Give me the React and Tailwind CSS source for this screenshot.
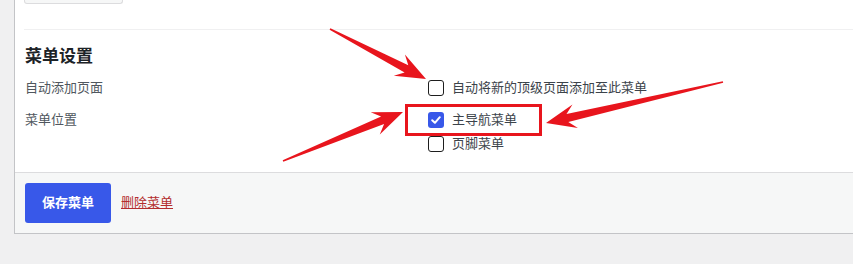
import React from 'react';

const FONT = { fontFamily: '"Liberation Sans", "Noto Sans CJK SC", sans-serif' };

// arrows are drawn as one polygon: thin tail, shaft widening, swept-back head
const arrowPoints = (x1, y1, x2, y2) => {
  const dx = x2 - x1;
  const dy = y2 - y1;
  const len = Math.hypot(dx, dy);
  const ux = dx / len;
  const uy = dy / len;
  const nx = -uy;
  const ny = ux;
  const headLen = 30;
  const headW = 12;
  const neckW = 4;
  const tailW = 0.8;
  const at = (d, w) => [x1 + ux * d + nx * w, y1 + uy * d + ny * w];
  const pts = [
    at(0, tailW),
    at(len - headLen + 8, neckW),
    at(len - headLen, headW),
    [x2, y2],
    at(len - headLen, -headW),
    at(len - headLen + 8, -neckW),
    at(0, -tailW),
  ];
  return pts.map((p) => p.map((v) => v.toFixed(1)).join(',')).join(' ');
};

const arrows = [
  [330, 29, 426, 79],
  [283, 161, 403, 112],
  [723, 82, 546, 123],
];

const Checkbox = ({ checked }) => (
  <span
    className={
      checked
        ? 'w-4 h-4 rounded-[3px] bg-[#3858e9] flex items-center justify-center shrink-0'
        : 'w-4 h-4 rounded-[3px] border border-[#1e1e1e] bg-white shrink-0'
    }
  >
    {checked && (
      <svg width="12" height="12" viewBox="0 0 12 12">
        <path d="M2.2 6.2 L4.9 8.8 L9.8 3.2" fill="none" stroke="white" strokeWidth="2" strokeLinecap="round" strokeLinejoin="round" />
      </svg>
    )}
  </span>
);

const Option = ({ checked, label }) => (
  <label className="h-6 flex items-center gap-2 text-[13px] text-[#3c434a]">
    <Checkbox checked={checked} />
    <span>{label}</span>
  </label>
);

export default function App() {
  return (
    <div className="relative w-[853px] h-[264px] bg-[#f0f0f1] pl-[14px] overflow-hidden" style={FONT}>
      <div className="w-[860px] bg-white border-l border-b border-[#c3c4c7]">
        <div className="px-[9px]">
          <div className="w-[99px] h-[4px] border-x border-b border-[#dcdcde] rounded-b-[3px] bg-[#f6f7f7]" />
          <div className="mt-[25px] border-t border-[#f0f0f1]" />
          <h3 className="mt-[15px] h-6 leading-6 pl-px text-[17px] font-semibold text-[#1d2327]">菜单设置</h3>
          <div className="mt-[7px] grid grid-cols-[403px_1fr] pl-px">
            <div className="h-6 leading-6 text-[13px] text-[#50575e]">自动添加页面</div>
            <div>
              <Option label="自动将新的顶级页面添加至此菜单" />
            </div>
          </div>
          <div className="mt-2 mb-4 grid grid-cols-[403px_1fr] pl-px">
            <div className="h-6 leading-6 text-[13px] text-[#50575e]">菜单位置</div>
            <div className="flex flex-col">
              <Option checked label="主导航菜单" />
              <Option label="页脚菜单" />
            </div>
          </div>
        </div>
        <div className="bg-[#f6f7f7] border-t border-[#dcdcde] px-[10px] py-[10px] flex items-center gap-[10px]">
          <button className="w-[86px] h-10 rounded-[3px] bg-[#3858e9] text-white text-[13px] font-semibold">
            保存菜单
          </button>
          <a className="text-[13px] text-[#b32d2e] underline">删除菜单</a>
        </div>
      </div>

      <div className="absolute left-[405px] top-[104px] w-[137px] h-[32px] border-[3px] border-[#e8151d]" />
      <svg className="absolute inset-0 pointer-events-none" width="853" height="264">
        {arrows.map((a, i) => (
          <polygon key={i} points={arrowPoints(...a)} fill="#e8151d" />
        ))}
      </svg>
    </div>
  );
}
